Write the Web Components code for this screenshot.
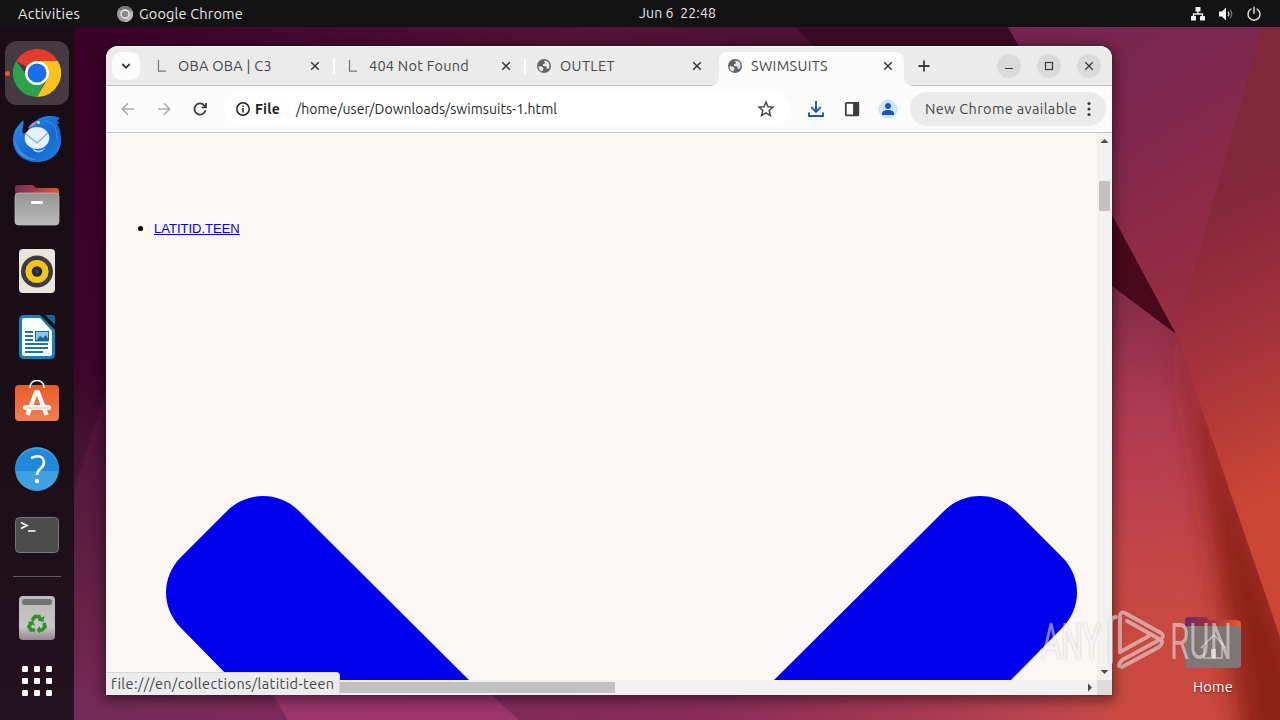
<!DOCTYPE html>
<html lang="en">
<head>
<meta charset="utf-8">
<title>Desktop</title>
<style>
    html, body {
        margin: 0;
        width: 1280px;
        height: 720px;
        overflow: hidden;
        font-family: Ubuntu, "Noto Sans", "Open Sans", sans-serif;
    }
</style>
</head>
<body>
<desktop-shell>
    <top-bar slot="top"></top-bar>
    <app-dock slot="dock"></app-dock>
    <home-folder slot="canvas"></home-folder>
    <browser-window slot="canvas">
        <tab-strip slot="tabs">
            <browser-tab icon="letter" label="OBA OBA | C3" w="94"></browser-tab>
            <browser-tab icon="letter" label="404 Not Found" w="100" divided></browser-tab>
            <browser-tab icon="globe" label="OUTLET" w="55" divided></browser-tab>
            <browser-tab icon="globe" label="SWIMSUITS" w="77" active></browser-tab>
        </tab-strip>
        <tool-bar slot="toolbar"></tool-bar>
        <page-view slot="page"></page-view>
    </browser-window>
    <water-mark slot="canvas"></water-mark>
</desktop-shell>

<script>
    function attach(el, html) {
        const template = document.createElement('template');
        template.innerHTML = html;
        el.attachShadow({ mode: 'open' }).appendChild(template.content.cloneNode(true));
    }

    // one line of text, spaced out to fill the given width
    class FitText extends HTMLElement {
        connectedCallback() {
            if (this.shadowRoot) return;
            attach(this, `
                <style>
                    :host { display: block; flex: none; }
                    span { display: block; width: max-content; white-space: pre; }
                </style>
                <span></span>
            `);
            const span = this.shadowRoot.querySelector('span');
            span.textContent = this.getAttribute('text');
            const width = Number(this.getAttribute('w'));
            const natural = span.getBoundingClientRect().width;
            this.style.width = width + 'px';
            span.style.letterSpacing = (width - natural) / span.textContent.length + 'px';
        }
    }
    customElements.define('fit-text', FitText);

    class DesktopShell extends HTMLElement {
        constructor() {
            super();
            attach(this, `
                <style>
                    :host {
                        display: grid;
                        grid-template: 27px 693px / 74px 1206px;
                        position: relative;
                        width: 1280px;
                        height: 720px;
                        overflow: hidden;
                    }
                    .wallpaper { position: absolute; left: 0; top: 0; }
                    slot[name=top] { display: block; grid-column: 1 / 3; position: relative; }
                    slot[name=dock] { display: block; position: relative; }
                </style>
                <svg class="wallpaper" width="1280" height="720" viewBox="0 0 1280 720">
                    <defs>
                        <linearGradient id="left" x1="0" y1="0" x2="0" y2="1">
                            <stop offset="0" stop-color="#3a0029"/>
                            <stop offset=".5" stop-color="#3d0529"/>
                            <stop offset=".58" stop-color="#431030"/>
                            <stop offset=".85" stop-color="#61203f"/>
                            <stop offset="1" stop-color="#722a58"/>
                        </linearGradient>
                        <linearGradient id="topstrip" gradientUnits="userSpaceOnUse" x1="74" y1="0" x2="1010" y2="0">
                            <stop offset="0" stop-color="#3a0029"/>
                            <stop offset=".55" stop-color="#531338"/>
                            <stop offset="1" stop-color="#46112f"/>
                        </linearGradient>
                        <linearGradient id="bottom" gradientUnits="userSpaceOnUse" x1="74" y1="0" x2="1280" y2="0">
                            <stop offset="0" stop-color="#712b57"/>
                            <stop offset=".17" stop-color="#7c2b5c"/>
                            <stop offset=".5" stop-color="#862c58"/>
                            <stop offset=".66" stop-color="#9e3654"/>
                            <stop offset=".8" stop-color="#b94450"/>
                            <stop offset=".87" stop-color="#ca4a42"/>
                        </linearGradient>
                        <linearGradient id="upper" gradientUnits="userSpaceOnUse" x1="1040" y1="40" x2="1200" y2="300">
                            <stop offset="0" stop-color="#742550"/>
                            <stop offset=".4" stop-color="#80274d"/>
                            <stop offset="1" stop-color="#982d42"/>
                        </linearGradient>
                        <linearGradient id="east" gradientUnits="userSpaceOnUse" x1="1190" y1="200" x2="1320" y2="470">
                            <stop offset="0" stop-color="#81263b"/>
                            <stop offset=".45" stop-color="#a0303c"/>
                            <stop offset="1" stop-color="#cb4634"/>
                        </linearGradient>
                        <linearGradient id="lower" gradientUnits="userSpaceOnUse" x1="1112" y1="290" x2="1140" y2="640">
                            <stop offset="0" stop-color="#832a49"/>
                            <stop offset=".35" stop-color="#ae3a51"/>
                            <stop offset=".75" stop-color="#c34549"/>
                            <stop offset="1" stop-color="#ca4a40"/>
                        </linearGradient>
                        <clipPath id="lowerclip"><path d="M1100 277L1176 334L1280 637V720H1100z"/></clipPath>
                        <filter id="soft" x="-50%" y="-20%" width="200%" height="140%"><feGaussianBlur stdDeviation="13"/></filter>
                    </defs>
                    <rect width="1280" height="720" fill="url(#topstrip)"/>
                    <rect x="74" y="27" width="40" height="693" fill="url(#left)"/>
                    <path d="M74 490L106 390V720H74z" fill="#a23a70" opacity=".12"/>
                    <path d="M795 27H1010L1020 47H815z" fill="#3b0a22"/>
                    <path d="M1008 27H1280V340H1176L1095 187V180z" fill="url(#upper)"/>
                    <path d="M1262 27H1280V645L1176 334z" fill="url(#east)"/>
                    <path d="M1100 193L1112 215L1176 334L1100 279z" fill="#48091c"/>
                    <path d="M1100 277L1176 334L1280 637V720H1100z" fill="url(#lower)"/>
                    <path d="M74 690H1115V720H74z" fill="url(#bottom)"/>
                    <g clip-path="url(#lowerclip)">
                        <path d="M1176 320L1310 690V760H1246L1205 480z" fill="#8f2418" filter="url(#soft)"/>
                    </g>
                    <path d="M270 690H486L519 720H288z" fill="#a63972" opacity=".75"/>
                </svg>
                <slot name="top"></slot>
                <slot name="dock"></slot>
                <slot name="canvas"></slot>
            `);
        }
    }
    customElements.define('desktop-shell', DesktopShell);

    class TopBar extends HTMLElement {
        constructor() {
            super();
            attach(this, `
                <style>
                    :host {
                        display: grid;
                        grid-template-columns: 621px 77px 1fr;
                        align-items: center;
                        height: 27px;
                        padding: 0 18px;
                        box-sizing: border-box;
                        background: #131313;
                        color: #e8e8e8;
                        font-size: 14.5px;
                        line-height: 26px;
                    }
                    .left, .right { display: flex; align-items: center; }
                    .left svg { margin: 0 6px 0 37px; }
                    .right { justify-content: flex-end; gap: 12px; padding-bottom: 1px; }
                    .clock { font-size: 14px; padding-bottom: 2px; }
                </style>
                <div class="left">
                    <fit-text text="Activities" w="62"></fit-text>
                    <svg width="16" height="16" viewBox="0 0 16 16">
                        <circle cx="8" cy="8" r="8" fill="#9b9b9b"/>
                        <path d="M1 4A8 8 0 0 1 15 4H8z" fill="#777"/>
                        <path d="M15.5 5A8 8 0 0 1 8 16L11 9z" fill="#bcbcbc"/>
                        <circle cx="8" cy="8" r="4" fill="#8a8a8a" stroke="#eee" stroke-width="1.3"/>
                    </svg>
                    <fit-text text="Google Chrome" w="104"></fit-text>
                </div>
                <fit-text class="clock" text="Jun 6  22:48" w="77"></fit-text>
                <div class="right">
                    <svg width="16" height="16" viewBox="0 0 16 16" fill="#f2f2f2">
                        <rect x="5.5" y="1" width="5" height="4.5" rx=".6"/>
                        <rect x="1" y="10" width="5" height="4.5" rx=".6"/>
                        <rect x="10" y="10" width="5" height="4.5" rx=".6"/>
                        <path d="M8 5V8M3.5 10.5V8H12.5V10.5" fill="none" stroke="#f2f2f2" stroke-width="1.3"/>
                    </svg>
                    <svg width="16" height="16" viewBox="0 0 16 16">
                        <path d="M1 5.5H4L8 1.5V14.5L4 10.5H1z" fill="#f2f2f2"/>
                        <path d="M10 5.6Q12 8 10 10.4" fill="none" stroke="#ddd" stroke-width="1.2"/>
                        <path d="M12 3.7Q15.5 8 12 12.3" fill="none" stroke="#777" stroke-width="1.2"/>
                    </svg>
                    <svg width="16" height="16" viewBox="0 0 16 16" fill="none" stroke="#e8e8e8" stroke-width="1.4" stroke-linecap="round">
                        <path d="M5 3A6 6 0 1 0 11 3M8 1.2V7.3"/>
                    </svg>
                </div>
            `);
        }
    }
    customElements.define('top-bar', TopBar);

    class AppDock extends HTMLElement {
        constructor() {
            super();
            attach(this, `
                <style>
                    :host {
                        display: flex;
                        flex-direction: column;
                        align-items: center;
                        width: 74px;
                        height: 693px;
                        padding-top: 14px;
                        box-sizing: border-box;
                        background: linear-gradient(#190d15, #1b0f17 60%, #24121f);
                    }
                    .cell {
                        display: flex;
                        align-items: center;
                        justify-content: center;
                        position: relative;
                        width: 64px;
                        height: 64px;
                        margin-bottom: 2px;
                        border-radius: 12px;
                        flex: none;
                    }
                    .cell.on { background: #463a42; }
                    .cell.on::before {
                        content: "";
                        position: absolute;
                        left: 0;
                        width: 5px;
                        height: 5px;
                        border-radius: 3px;
                        background: #e95420;
                    }
                    #grid { margin-top: -3px; }
                    hr { width: 48px; height: 1px; border: 0; margin: 7px 0 9px; background: #605860; flex: none; }
                    svg { display: block; }
                </style>
                <div class="cell on">
                    <svg width="48" height="48" viewBox="0 0 48 48">
                        <path d="M24 24L3.2 12A24 24 0 0 1 44.8 12z" fill="#e33b2e"/>
                        <path d="M24 24H12L3.2 12A24 24 0 0 0 24 48L33 30z" fill="#2ba24c"/>
                        <path d="M24 12H44.8A24 24 0 0 1 24 48L34.4 30z" fill="#fcc31e"/>
                        <circle cx="24" cy="24" r="12" fill="#fff"/>
                        <circle cx="24" cy="24" r="9.5" fill="#1a6fe8"/>
                    </svg>
                </div>
                <div class="cell">
                    <svg width="50" height="50" viewBox="0 0 50 50">
                        <defs>
                            <linearGradient id="tb" x1="0" y1="0" x2="1" y2="1">
                                <stop offset="0" stop-color="#2b90ee"/><stop offset=".6" stop-color="#1768cf"/><stop offset="1" stop-color="#1f86e8"/>
                            </linearGradient>
                        </defs>
                        <path d="M11 6C8 11 1 14 1 26C1 40 12 48 25 48C39 48 49 39 49 26C49 17 47 13 45 10L48 9L45 7L48 4C38 0 27 2 21 10L17 14C16 18 13 20 11 19C9 15 13 10 11 6z" fill="url(#tb)"/>
                        <path d="M11 6C14 11 13 15 11 20L15 16L21 9L17 11z" fill="#190d15"/>
                        <path d="M2.500 24C4 35 12 43 25 45.500C13 48 2 38 2.500 24z" fill="#3b93e3"/>
                        <path d="M16 14C20 9 22 7 27 7C23 9 23 12 16 14z" fill="#bd91c8"/>
                        <circle cx="26.5" cy="8.5" r="1.4" fill="#bfe3ff"/>
                        <path d="M32 7C40 7 45 12 45 25" fill="none" stroke="#2a88e0" stroke-width="1.500"/>
                        <ellipse cx="25" cy="24" rx="12.3" ry="11" fill="#e6f2fb"/>
                        <path d="M14 20L25 29L36 19" fill="none" stroke="#8ab7d9" stroke-width="1.6"/>
                        <path d="M20 33C22 37 28 38 33 34C31 39 22 41 20 33z" fill="#a8d9fa"/>
                    </svg>
                </div>
                <div class="cell">
                    <svg width="46" height="42" viewBox="0 0 46 42">
                        <defs>
                            <linearGradient id="ft"><stop offset="0" stop-color="#762b5a"/><stop offset="1" stop-color="#e9532a"/></linearGradient>
                            <linearGradient id="fb" x1="0" y1="0" x2="0" y2="1"><stop offset="0" stop-color="#949494"/><stop offset="1" stop-color="#bababa"/></linearGradient>
                        </defs>
                        <path d="M1 14V4Q1 1 4 1H18Q20 1 21 3L22 4H42Q45 4 45 7V16H1z" fill="url(#ft)"/>
                        <rect x="1" y="9" width="44" height="32" rx="3.5" fill="url(#fb)" stroke="#c4c4c4" stroke-width=".7"/>
                        <rect x="17" y="17" width="12" height="3" rx="1" fill="#fff"/>
                    </svg>
                </div>
                <div class="cell">
                    <svg width="36" height="46" viewBox="0 0 36 46">
                        <rect y="1" width="36" height="44" rx="4" fill="#e9e4dc"/>
                        <circle cx="18" cy="23.5" r="16" fill="#3a3d45"/>
                        <circle cx="18" cy="23.5" r="12.2" fill="#f5c421" stroke="#242830" stroke-width="1"/>
                        <circle cx="18" cy="23.5" r="5.2" fill="#222a32"/>
                        <circle cx="18" cy="23.5" r="2" fill="#3c4650"/>
                    </svg>
                </div>
                <div class="cell">
                    <svg width="38" height="46" viewBox="0 0 38 46">
                        <path d="M6 1H22L37 16V40Q37 45 32 45H6Q1 45 1 40V6Q1 1 6 1z" fill="#1780b4"/>
                        <path d="M27 1H35Q37 1 37 3V11z" fill="#11689b"/>
                        <path d="M6 4H22L34 17V40Q34 42 32 42H6Q4 42 4 40V6Q4 4 6 4z" fill="#fff"/>
                        <path d="M7 18H15M7 22H15M7 26H15M7 30H30M7 34H30M7 38H25" stroke="#1b76a6" stroke-width="1.8"/>
                        <rect x="17.5" y="17.5" width="13" height="9.5" fill="#8bc6eb" stroke="#166c9d"/>
                        <path d="M18 27L22 22L25 24L28 21L31 27z" fill="#126695"/>
                    </svg>
                </div>
                <div class="cell">
                    <svg width="46" height="46" viewBox="0 0 46 46">
                        <defs><linearGradient id="sw" x1="0" y1="0" x2="0" y2="1"><stop offset="0" stop-color="#e95b28"/><stop offset="1" stop-color="#f37f50"/></linearGradient></defs>
                        <rect x="1" y="5" width="44" height="36" rx="4" fill="url(#sw)"/>
                        <path d="M16 8V7A7 6.500 0 0 1 30 7V8" fill="none" stroke="#f1eeee" stroke-width="1.7"/>
                        <path d="M13.500 35L22 12.500H24L32.500 35" fill="none" stroke="#fff" stroke-width="4.3"/>
                        <path d="M11.500 27.500H34.500" stroke="#fff" stroke-width="5" stroke-linecap="round"/>
                        <path d="M12 28H34" stroke="#f5a582" stroke-width=".8"/>
                    </svg>
                </div>
                <div class="cell">
                    <svg width="46" height="46" viewBox="0 0 46 46">
                        <circle cx="23" cy="23" r="22" fill="#3fa1df"/>
                        <path d="M1 25A22 22 0 1 1 45 25z" fill="#1f88db"/>
                        <path d="M17 12Q29 7 30 16.500C30 23 23 22 23 29" fill="none" stroke="#fff" stroke-width="2.6"/>
                        <circle cx="23" cy="35" r="2.2" fill="#fff"/>
                    </svg>
                </div>
                <div class="cell">
                    <svg width="46" height="38" viewBox="0 0 46 38">
                        <rect x="1.5" y="1.5" width="43" height="35" rx="4" fill="#4c4c4c" stroke="#777"/>
                        <path d="M7 6.5L13 9.5L7 12.5M14 15H21.5" fill="none" stroke="#fff" stroke-width="1.7"/>
                    </svg>
                </div>
                <hr>
                <div class="cell">
                    <svg width="36" height="46" viewBox="0 0 36 46">
                        <defs><linearGradient id="tr" x1="0" y1="0" x2="0" y2="1"><stop offset="0" stop-color="#bcb9ba"/><stop offset=".7" stop-color="#c7c5c7"/><stop offset="1" stop-color="#8d888d"/></linearGradient></defs>
                        <rect y="1" width="36" height="44" rx="4" fill="url(#tr)"/>
                        <rect x="3" y="4" width="30" height="6" rx="2.5" fill="#747674"/>
                        <g fill="none" stroke="#2f9128" stroke-width="3.600">
                            <path d="M13 25.500L16 21.500H20L22 25"/>
                            <path d="M25 28L26 32L23 35H20"/>
                            <path d="M16 35H12L10 31.500L12 28"/>
                        </g>
                        <path d="M18.500 25.500L24.500 27L25.500 21z M21 31V38.500L17.500 35z M8.500 27L14 26L16 31z" fill="#2f9128"/>
                    </svg>
                </div>
                <div class="cell" id="grid"></div>
            `);
            let dots = '';
            for (let i = 0; i < 9; i++) {
                dots += `<rect x="${(i % 3) * 12}" y="${Math.floor(i / 3) * 12}" width="6" height="6" rx="1.3"/>`;
            }
            this.shadowRoot.querySelector('#grid').innerHTML =
                `<svg width="30" height="30" viewBox="0 0 30 30" fill="#fff">${dots}</svg>`;
        }
    }
    customElements.define('app-dock', AppDock);

    class HomeFolder extends HTMLElement {
        constructor() {
            super();
            attach(this, `
                <style>
                    :host {
                        position: absolute;
                        left: 1183px;
                        top: 614px;
                        width: 60px;
                        display: flex;
                        flex-direction: column;
                        align-items: center;
                        color: #fff;
                        font-size: 14.5px;
                        line-height: 20px;
                        text-shadow: 0 1px 2px rgba(0, 0, 0, .6);
                    }
                    fit-text { margin-top: 6px; }
                </style>
                <svg width="58" height="57" viewBox="0 0 58 57">
                    <defs>
                        <linearGradient id="t"><stop offset="0" stop-color="#722660"/><stop offset=".45" stop-color="#9b3242"/><stop offset="1" stop-color="#ed5a24"/></linearGradient>
                    </defs>
                    <path d="M1 18V7Q1 3 5 3H21L27 6H52Q57 6 57 10V20H1z" fill="url(#t)"/>
                    <rect x="1" y="12" width="56" height="42" rx="4" fill="#7f7775"/>
                    <path d="M17 34L30 21L42 34M20 33V44H38V33" fill="none" stroke="#c0bbb9" stroke-width="1.6"/>
                    <rect x="27" y="35" width="5" height="9" fill="#d5d1cf"/>
                </svg>
                <fit-text text="Home" w="40"></fit-text>
            `);
        }
    }
    customElements.define('home-folder', HomeFolder);

    class BrowserWindow extends HTMLElement {
        constructor() {
            super();
            attach(this, `
                <style>
                    :host {
                        position: absolute;
                        left: 106px;
                        top: 46px;
                        width: 1006px;
                        height: 649px;
                        display: flex;
                        flex-direction: column;
                        border-radius: 12px 12px 0 0;
                        background: #fbfbfb;
                        box-shadow: 0 3px 12px 3px rgba(0, 0, 0, .42), 0 0 1px rgba(0, 0, 0, .5);
                        overflow: hidden;
                        color: #474747;
                        font-size: 14.5px;
                    }
                </style>
                <slot name="tabs"></slot>
                <slot name="toolbar"></slot>
                <slot name="page"></slot>
            `);
        }
    }
    customElements.define('browser-window', BrowserWindow);

    class TabStrip extends HTMLElement {
        constructor() {
            super();
            attach(this, `
                <style>
                    :host {
                        display: flex;
                        align-items: center;
                        height: 40px;
                        box-sizing: border-box;
                        padding: 0 11px 0 6px;
                        background: linear-gradient(#fff 0 1px, #ebebeb 1px 39px, #bfbfbf 39px);
                        flex: none;
                    }
                    .search {
                        display: flex;
                        width: 28px;
                        height: 28px;
                        border-radius: 9px;
                        background: #fbfbfb;
                        margin-right: 9px;
                    }
                    .tabs { display: flex; align-self: flex-end; height: 34px; }
                    .plus { margin-left: 1px; }
                    .controls { display: flex; gap: 16px; margin-left: auto; }
                    .controls svg { border-radius: 50%; background: #dadada; }
                    svg { display: block; fill: none; stroke: #3c3c3c; }
                </style>
                <div class="search">
                    <svg width="28" height="28" viewBox="0 0 28 28" stroke-width="1.8"><path d="M10.300 12L14 15.700L17.700 12"/></svg>
                </div>
                <div class="tabs"><slot></slot></div>
                <svg class="plus" width="20" height="20" viewBox="0 0 20 20" stroke-width="1.8"><path d="M10 4.500V15.500M4.500 10H15.500"/></svg>
                <div class="controls">
                    <svg width="24" height="24" viewBox="0 0 24 24" stroke-width="1.2"><path d="M8 14.500H16"/></svg>
                    <svg width="24" height="24" viewBox="0 0 24 24" stroke-width="1.2"><rect x="8.500" y="8.500" width="7" height="7"/></svg>
                    <svg width="24" height="24" viewBox="0 0 24 24" stroke-width="1.3"><path d="M8.300 8.300L15.700 15.700M15.700 8.300L8.300 15.700"/></svg>
                </div>
            `);
        }
    }
    customElements.define('tab-strip', TabStrip);

    const TAB_ICONS = {
        letter: '<path d="M4.500 1.800V13.200H12" fill="none" stroke="#777" stroke-width="1.200"/>',
        globe: '<circle cx="8" cy="8" r="7" fill="#5f6368"/><path d="M2.500 8.500C5 8 7.500 9 7.500 11L6 13.500C3.500 12.500 2.500 11 2.500 8.500zM8 2.500L11.500 3.500C14 5.500 14 8.500 12.500 11L10.500 10.500V8.500L7 8V6.200L9 5.500z" fill="#e6e6e6"/>'
    };

    class BrowserTab extends HTMLElement {
        constructor() {
            super();
            attach(this, `
                <style>
                    :host {
                        display: flex;
                        align-items: center;
                        position: relative;
                        width: 191px;
                        height: 34px;
                        padding: 0 17px 6px 5px;
                        box-sizing: border-box;
                        line-height: 28px;
                    }
                    :host([divided])::before {
                        content: "";
                        position: absolute;
                        left: -7px;
                        top: 6px;
                        width: 2px;
                        height: 16px;
                        background: #fbfbfb;
                    }
                    .shape { position: absolute; left: -11px; top: 0; display: none; }
                    :host([active]) .shape { display: block; }
                    .icon, fit-text, .close { position: relative; }
                    fit-text { margin-left: 8px; }
                    .close { margin-left: auto; }
                </style>
                <svg class="shape" width="206" height="34" viewBox="0 0 206 34">
                    <path d="M0 34Q8 33 8 25V9Q8 0 17 0H184Q193 0 193 9V25Q193 33 202 34z" fill="#fbfbfb"/>
                </svg>
                <svg class="icon" width="16" height="16" viewBox="0 0 16 16">${TAB_ICONS[this.getAttribute('icon')]}</svg>
                <fit-text text="${this.getAttribute('label')}" w="${this.getAttribute('w')}"></fit-text>
                <svg class="close" width="16" height="16" viewBox="0 0 16 16" fill="none" stroke="#3c3c3c" stroke-width="1.600"><path d="M4.200 4.200L11.800 11.800M11.800 4.200L4.200 11.800"/></svg>
            `);
        }
    }
    customElements.define('browser-tab', BrowserTab);

    class ToolBar extends HTMLElement {
        constructor() {
            super();
            attach(this, `
                <style>
                    :host {
                        display: flex;
                        align-items: center;
                        height: 47px;
                        box-sizing: border-box;
                        padding: 0 6px 0 12px;
                        border-bottom: 1px solid #c6c6c6;
                        background: #fbfbfb;
                        flex: none;
                        line-height: 20px;
                    }
                    svg { display: block; fill: none; flex: none; }
                    .nav { display: flex; gap: 16px; }
                    .omnibox {
                        display: flex;
                        align-items: center;
                        width: 566px;
                        height: 34px;
                        margin-left: 14px;
                        padding: 0 14px 0 11px;
                        box-sizing: border-box;
                        border-radius: 17px;
                        background: #fff;
                        color: #1f1f1f;
                        font-size: 14px;
                    }
                    .file { font-weight: 600; margin: 0 16px 0 4px; }
                    .omnibox svg:last-child { margin-left: auto; }
                    .actions { display: flex; gap: 16px; margin-left: 16px; }
                    .update {
                        display: flex;
                        align-items: center;
                        height: 34px;
                        margin-left: auto;
                        padding: 0 7px 0 15px;
                        border-radius: 17px;
                        background: #ebebeb;
                        gap: 2px;
                    }
                </style>
                <div class="nav">
                    <svg width="20" height="20" viewBox="0 0 20 20" stroke="#aaa" stroke-width="1.600"><path d="M16 10H4.500M10 4.300L4.300 10L10 15.700"/></svg>
                    <svg width="20" height="20" viewBox="0 0 20 20" stroke="#aaa" stroke-width="1.600"><path d="M4 10H15.500M10 4.300L15.700 10L10 15.700"/></svg>
                    <svg width="20" height="20" viewBox="0 0 20 20" stroke="#3c3c3c" stroke-width="1.800"><path d="M15.500 11.200A5.600 5.600 0 1 1 14.200 6.300L16 8"/><path d="M16 4V8.300H11.600"/></svg>
                </div>
                <div class="omnibox">
                    <svg width="16" height="16" viewBox="0 0 16 16" stroke="#1f1f1f" stroke-width="1.500"><circle cx="8" cy="8" r="6.200"/><path d="M8 7V11.500M8 4.500V6"/></svg>
                    <fit-text class="file" text="File" w="25"></fit-text>
                    <fit-text text="/home/user/Downloads/swimsuits-1.html" w="261"></fit-text>
                    <svg width="20" height="20" viewBox="0 0 20 20" stroke="#474747" stroke-width="1.500"><path d="M10 3L12 7.800L17 8.200L13.200 11.500L14.400 16.600L10 13.900L5.600 16.600L6.800 11.500L3 8.200L8 7.800z"/></svg>
                </div>
                <div class="actions">
                    <svg width="20" height="20" viewBox="0 0 20 20" stroke="#1558b8" stroke-width="1.900"><path d="M10 2V12.500M5.200 8.200L10 13L14.800 8.200M3 13.500V17H17V13.500"/></svg>
                    <svg width="20" height="20" viewBox="0 0 20 20" stroke="#3c3c3c" stroke-width="1.800"><rect x="3.800" y="3.800" width="12.500" height="12.500" rx="1"/><path d="M12 4H16V16H12z" fill="#3c3c3c"/></svg>
                    <svg width="20" height="20" viewBox="0 0 20 20"><circle cx="10" cy="10" r="9.700" fill="#d0e4fc"/><circle cx="10" cy="6.900" r="3" fill="#1456bc"/><path d="M4 16V14.500Q4 11 10 11Q16 11 16 14.500V16z" fill="#1456bc"/></svg>
                </div>
                <div class="update">
                    <fit-text text="New Chrome available" w="152"></fit-text>
                    <svg width="20" height="20" viewBox="0 0 20 20"><g fill="#3c3c3c"><circle cx="10" cy="4.500" r="1.600"/><circle cx="10" cy="10" r="1.600"/><circle cx="10" cy="15.500" r="1.600"/></g></svg>
                </div>
            `);
        }
    }
    customElements.define('tool-bar', ToolBar);

    class PageView extends HTMLElement {
        constructor() {
            super();
            attach(this, `
                <style>
                    :host {
                        display: grid;
                        grid-template: 547px 15px / 991px 15px;
                        position: relative;
                        flex: 1;
                    }
                    .page {
                        background: #faf7f5;
                        overflow: hidden;
                        font: 13px "Liberation Sans", Arial, sans-serif;
                    }
                    ul { margin: 87px 0 0; padding-left: 48px; height: 16px; line-height: 16px; color: #000; }
                    li::marker { font-size: 16px; }
                    a { color: #0000ee; text-decoration: underline; }
                    .cross { display: block; margin-top: 259px; }
                    .vbar, .hbar { background: #f1f1f1; display: flex; }
                    .vbar { flex-direction: column; }
                    .vbar .thumb { width: 11px; height: 30px; margin: 33px 2px auto; background: #c1c1c1; }
                    .hbar .thumb { width: 494px; height: 11px; margin: 2px auto 2px 15px; background: #c1c1c1; }
                    .corner { background: #dcdcdc; }
                    .status {
                        position: absolute;
                        left: 0;
                        bottom: 0;
                        height: 23px;
                        width: 234px;
                        padding-left: 5px;
                        box-sizing: border-box;
                        border: 1px solid #d6d6d6;
                        border-width: 1px 1px 0 0;
                        border-radius: 0 4px 0 0;
                        background: #ececec;
                        line-height: 22px;
                        color: #474747;
                    }
                    svg { display: block; flex: none; }
                </style>
                <div class="page">
                    <ul><li><a href="#">LATITID.TEEN</a></li></ul>
                    <svg class="cross" width="991" height="185" viewBox="106 495 991 185" fill="#0000ee">
                        <path d="M469 680L299 511C279 491 247 491 227 511L181 557C161 577 161 608 181 628L232 680z"/>
                        <path d="M774 680L944 511C964 491 996 491 1016 511L1062 557C1082 577 1082 608 1062 628L1011 680z"/>
                    </svg>
                </div>
                <div class="vbar">
                    <svg width="15" height="15" viewBox="0 0 15 15"><path d="M3.500 10L7.500 6L11.500 10z" fill="#4d4d4d"/></svg>
                    <div class="thumb"></div>
                    <svg width="15" height="15" viewBox="0 0 15 15"><path d="M3.500 5L7.500 9L11.500 5z" fill="#4d4d4d"/></svg>
                </div>
                <div class="hbar">
                    <div class="thumb"></div>
                    <svg width="15" height="15" viewBox="0 0 15 15"><path d="M6 3.500L10 7.500L6 11.500z" fill="#4d4d4d"/></svg>
                </div>
                <div class="corner"></div>
                <div class="status"><fit-text text="file:///en/collections/latitid-teen" w="223"></fit-text></div>
            `);
        }
    }
    customElements.define('page-view', PageView);

    class WaterMark extends HTMLElement {
        constructor() {
            super();
            attach(this, `
                <style>
                    :host { position: absolute; left: 1036px; top: 605px; display: block; opacity: .52; }
                    svg { display: block; overflow: visible; filter: drop-shadow(0 0 1px rgba(90, 80, 80, .55)); }
                    text { font: 400 50px Roboto, "Open Sans", sans-serif; fill: #f3efef; }
                </style>
                <svg width="200" height="72" viewBox="0 0 200 72">
                    <text x="5" y="54" textLength="60" lengthAdjust="spacingAndGlyphs">ANY</text>
                    <g fill="none" stroke="#f3efef" stroke-width="3.800" stroke-linejoin="round" stroke-linecap="round">
                        <path d="M84 47V10Q85 6 89 8L125 28Q129 31 125 34L88 54Q83 57 83 61"/>
                        <path d="M125 35L91 16M84 47L113 31M86 62L123 42Q128 38 125 34M80 12Q75 12 75 18V57"/>
                    </g>
                    <text x="134" y="54" textLength="62" lengthAdjust="spacingAndGlyphs">RUN</text>
                </svg>
            `);
        }
    }
    customElements.define('water-mark', WaterMark);
</script>
</body>
</html>
